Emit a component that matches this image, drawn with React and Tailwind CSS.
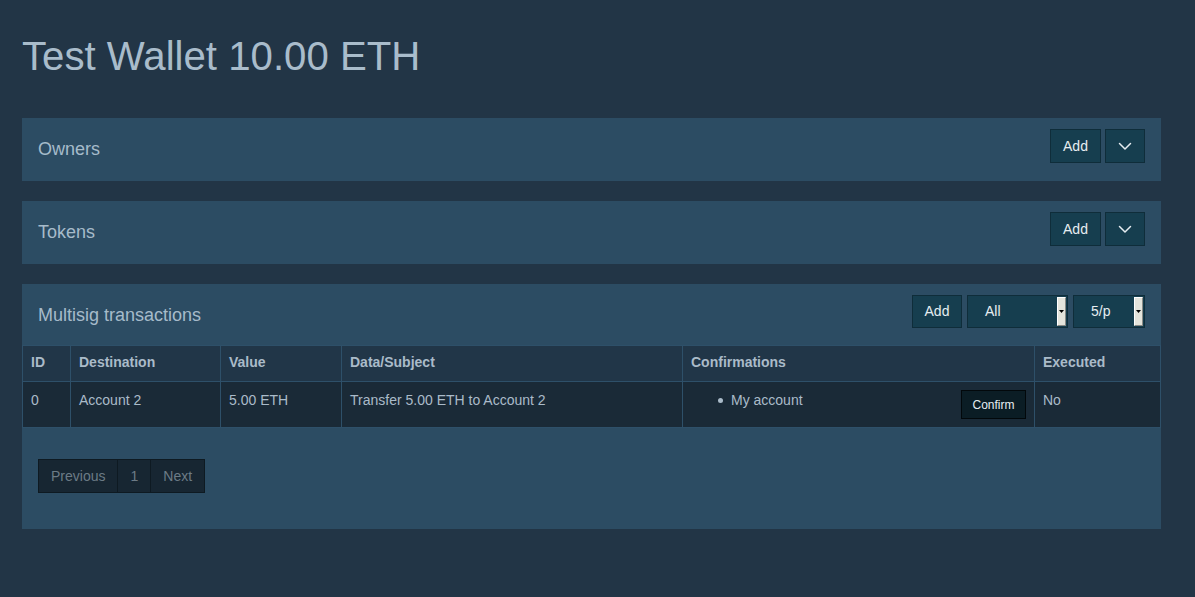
import React from "react";

function Btn({ children, className = "" }) {
  return (
    <button
      className={
        "bg-[#163e4f] border border-[#0f2d3a] text-[#e6edf1] text-[14px] flex items-center justify-center " +
        className
      }
    >
      {children}
    </button>
  );
}

function Chevron() {
  return (
    <svg width="14" height="14" viewBox="0 0 14 14" fill="none">
      <polyline points="1.5,4.5 7,10 12.5,4.5" stroke="#e6edf1" strokeWidth="1.5" strokeLinecap="round" strokeLinejoin="round" />
    </svg>
  );
}

function SelectBox({ label, width }) {
  return (
    <div className={"h-[33px] bg-[#163e4f] border border-[#0f2d3a] flex items-stretch " + width}>
      <span className="flex-1 pl-[17px] flex items-center text-[14px] text-[#e6edf1]">{label}</span>
      <span className="w-[9px] my-px mr-px bg-[#e4e4dc] border-t border-l border-white border-r border-b border-r-[#8a8a86] border-b-[#8a8a86] flex items-center justify-center">
        <svg width="5" height="3" viewBox="0 0 5 3">
          <polygon points="0,0 5,0 2.5,3" fill="#000" />
        </svg>
      </span>
    </div>
  );
}

function SimplePanel({ title }) {
  return (
    <div className="h-[63px] bg-[#2c4c63] flex items-start justify-between pl-4 pr-4 pt-[11px]">
      <span className="text-[18px] text-[#a6bbca] mt-[7px]">{title}</span>
      <div className="flex gap-[4px]">
        <Btn className="w-[51px] h-[34px]">Add</Btn>
        <Btn className="w-[40px] h-[34px]">
          <Chevron />
        </Btn>
      </div>
    </div>
  );
}

export default function App() {
  const th = "border border-[#2e5069] px-2 pt-[6px] pb-[9px] text-left font-bold leading-5";
  const td = "border border-[#2e5069] px-2 pt-2 pb-2 align-top leading-5";
  return (
    <div className="min-h-screen bg-[#223546] font-['Liberation_Sans',Arial,sans-serif] pl-[22px] pr-[34px] pt-[35px] pb-10">
      <h1 className="text-[40.2px] leading-[44px] text-[#a9bccb] font-normal">Test Wallet 10.00 ETH</h1>
      <div className="mt-[39px] flex flex-col gap-5">
        <SimplePanel title="Owners" />
        <SimplePanel title="Tokens" />
        <div className="bg-[#2c4c63] pb-9">
          <div className="h-[61px] flex items-start justify-between pl-4 pr-4 pt-[11px]">
            <span className="text-[18px] text-[#a6bbca] mt-[7px]">Multisig transactions</span>
            <div className="flex gap-[5px]">
              <Btn className="w-[50px] h-[33px]">Add</Btn>
              <SelectBox label="All" width="w-[101px]" />
              <SelectBox label="5/p" width="w-[72px]" />
            </div>
          </div>
          <table className="w-full border-collapse text-[14px] text-[#aabbc9]">
            <thead>
              <tr className="bg-[#213648]">
                <th className={th + " w-[48px]"}>ID</th>
                <th className={th + " w-[150px]"}>Destination</th>
                <th className={th + " w-[121px]"}>Value</th>
                <th className={th + " w-[341px]"}>Data/Subject</th>
                <th className={th + " w-[352px]"}>Confirmations</th>
                <th className={th}>Executed</th>
              </tr>
            </thead>
            <tbody>
              <tr className="bg-[#1a2a37]">
                <td className={td}>0</td>
                <td className={td}>Account 2</td>
                <td className={td}>5.00 ETH</td>
                <td className={td}>Transfer 5.00 ETH to Account 2</td>
                <td className={td}>
                  <div className="flex justify-between items-start">
                    <ul className="list-none pl-[27px] m-0">
                      <li className="flex items-center">
                        <span className="w-[5px] h-[5px] rounded-full bg-[#aabbc9] mr-2" />
                        My account
                      </li>
                    </ul>
                    <button className="w-[65px] h-[29px] bg-[#0b1d25] border border-[#02080b] text-[12px] text-[#e6edf1]">
                      Confirm
                    </button>
                  </div>
                </td>
                <td className={td}>No</td>
              </tr>
            </tbody>
          </table>
          <div className="mt-[31px] ml-4 flex text-[14px] text-[#6c7b86]">
            <span className="h-[34px] px-3 flex items-center bg-[#172632] border border-[#0e1a22]">Previous</span>
            <span className="h-[34px] px-3 -ml-px flex items-center bg-[#172632] border border-[#0e1a22]">1</span>
            <span className="h-[34px] px-3 -ml-px flex items-center bg-[#172632] border border-[#0e1a22]">Next</span>
          </div>
        </div>
      </div>
    </div>
  );
}
